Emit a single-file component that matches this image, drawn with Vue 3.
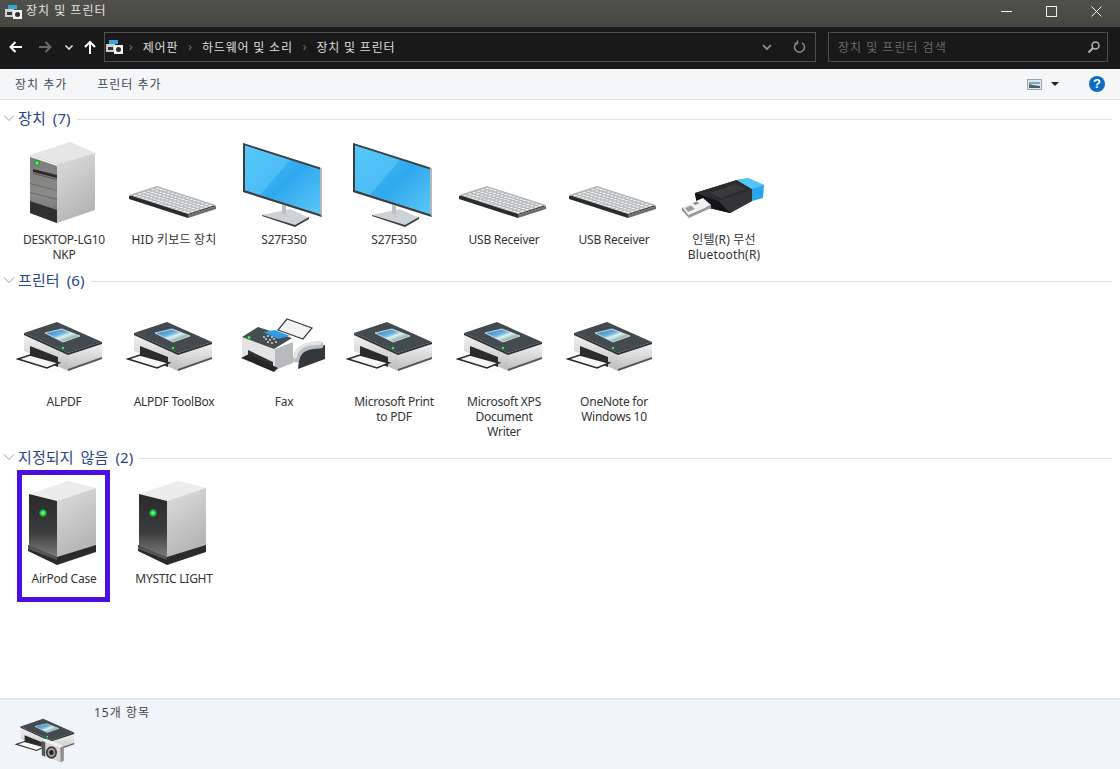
<script setup>
const groups = [
  {
    name: '장치',
    count: 7,
    items: [
      { icon: 'tower', label: 'DESKTOP-LG10\nNKP' },
      { icon: 'keyboard', label: 'HID 키보드 장치', ko: true },
      { icon: 'monitor', label: 'S27F350' },
      { icon: 'monitor', label: 'S27F350' },
      { icon: 'keyboard', label: 'USB Receiver' },
      { icon: 'keyboard', label: 'USB Receiver' },
      { icon: 'usb', label: '인텔(R) 무선\nBluetooth(R)', ko: true },
    ],
  },
  {
    name: '프린터',
    count: 6,
    items: [
      { icon: 'printer', label: 'ALPDF' },
      { icon: 'printer', label: 'ALPDF ToolBox' },
      { icon: 'fax', label: 'Fax' },
      { icon: 'printer', label: 'Microsoft Print\nto PDF' },
      { icon: 'printer', label: 'Microsoft XPS\nDocument\nWriter' },
      { icon: 'printer', label: 'OneNote for\nWindows 10' },
    ],
  },
  {
    name: '지정되지 않음',
    count: 2,
    items: [
      { icon: 'drive', label: 'AirPod Case', marked: true },
      { icon: 'drive', label: 'MYSTIC LIGHT' },
    ],
  },
];

const crumbs = ['제어판', '하드웨어 및 소리', '장치 및 프린터'];

// keyboard keys are laid out on a flat grid and skewed with a matrix in the symbol
const keys = [];
for (let r = 0; r < 6; r++) {
  for (let c = 0; c < 15; c++) {
    keys.push({ x: c + 0.18, y: r + 0.2 });
  }
}
</script>

<template>
  <div class="window">
    <svg class="defs" width="0" height="0">
      <defs>
        <linearGradient id="g-tower" x1="0" y1="0" x2="0" y2="1">
          <stop offset="0" stop-color="#7a7a7a" />
          <stop offset="0.6" stop-color="#8d8c8a" />
          <stop offset="1" stop-color="#6a6a68" />
        </linearGradient>
        <linearGradient id="g-side" x1="0" y1="0" x2="0.4" y2="1">
          <stop offset="0" stop-color="#dedede" />
          <stop offset="1" stop-color="#b5b5b5" />
        </linearGradient>
        <linearGradient id="g-screen" x1="0" y1="0" x2="1" y2="1">
          <stop offset="0" stop-color="#4cc2f8" />
          <stop offset="0.55" stop-color="#2fa9ee" />
          <stop offset="1" stop-color="#5cc6f6" />
        </linearGradient>
        <linearGradient id="g-drive" x1="0" y1="0" x2="0" y2="1">
          <stop offset="0" stop-color="#2a2a2a" />
          <stop offset="0.6" stop-color="#3c3c3c" />
          <stop offset="1" stop-color="#7c7c7c" />
        </linearGradient>
        <linearGradient id="g-body" x1="0" y1="0" x2="0" y2="1">
          <stop offset="0" stop-color="#f5f5f5" />
          <stop offset="1" stop-color="#bdbdbd" />
        </linearGradient>
        <linearGradient id="g-photo" x1="0" y1="0" x2="1" y2="1">
          <stop offset="0" stop-color="#1f73c0" />
          <stop offset="0.42" stop-color="#6fb6dd" />
          <stop offset="0.55" stop-color="#dceff4" />
          <stop offset="1" stop-color="#1f5a40" />
        </linearGradient>
        <radialGradient id="g-led">
          <stop offset="0" stop-color="#7dff8a" />
          <stop offset="0.6" stop-color="#1fd04a" />
          <stop offset="1" stop-color="#1c6b34" stop-opacity="0.4" />
        </radialGradient>
      </defs>

      <symbol id="small" viewBox="0 0 17 15">
        <rect x="3" y="0" width="9" height="4" fill="#3aa6d8" />
        <rect x="0" y="4" width="9" height="8" fill="#c9d1d6" />
        <rect x="2" y="7" width="5" height="3" fill="#30363a" />
        <rect x="8" y="5" width="9" height="9" fill="#f2f2f2" />
        <circle cx="12.500" cy="9.500" r="2.500" fill="#2a2e31" />
      </symbol>

      <symbol id="tower" viewBox="0 0 96 96">
        <polygon points="14,18 54,5 79,16 41,27" fill="#e6e6e6" />
        <polygon points="41,27 79,16 79,73 41,86" fill="url(#g-side)" />
        <polygon points="14,18 41,27 41,86 14,76" fill="url(#g-tower)" />
        <polygon points="14,18 41,27 41,29 14,20" fill="#f0f0f0" />
        <polygon points="17,32 41,38 41,41 17,35" fill="#2b2b2b" />
        <polygon points="17,36 41,42 41,43 17,37" fill="#555" />
        <polygon points="14,46 41,53 41,54 14,47" fill="#6a6a6a" />
        <polygon points="14,55 41,62 41,63 14,56" fill="#6a6a6a" />
        <polygon points="14,64 41,73 41,86 14,76" fill="#303030" />
        <circle cx="21" cy="26" r="3" fill="url(#g-led)" />
      </symbol>

      <symbol id="keyboard" viewBox="0 0 96 96">
        <polygon points="3,59 31,50 90,69 62,78 62,81 3,62" fill="#2b2b2b" />
        <polygon points="62,81 90,72 90,69 62,78" fill="#6d6d6d" />
        <polygon points="3,58 31,49 90,68 62,77" fill="#b1b5b8" />
        <g transform="matrix(3.75 1.22 4.4 -1.43 5.4 58.6)">
          <rect v-for="k in keys" :key="k.x + '-' + k.y" :x="k.x" :y="k.y" width="0.64" height="0.6" fill="#f1f3f3" />
        </g>
      </symbol>

      <symbol id="monitor" viewBox="0 0 96 96">
        <polygon points="26,78 54,72 73,81 59,90" fill="#cdd2d6" />
        <polygon points="59,88 73,80 73,82 59,90 26,79 26,78" fill="#3d3d3d" />
        <polygon points="46,68 50,69 50,78 46,77" fill="#b9bfc3" />
        <polygon points="7,6 86,31 86,80 7,55" fill="#b4b8bc" />
        <polygon points="7,6 84,30.500 84,33 9,9 9,53 84,77 86,80 7,55" fill="#3b3f44" />
        <polygon points="9,8.500 84,32.500 84,77 9,53" fill="url(#g-screen)" />
        <polygon points="9,8.500 54,23 24,58 9,53" fill="#63cdfa" opacity="0.5" />
      </symbol>

      <symbol id="usb" viewBox="0 0 96 96">
        <polygon points="19,56 61,43 76,52 76,64 54,76 21,68" fill="#1e1e20" />
        <polygon points="19,56 61,43 76,52 42,64" fill="#2c2c2e" />
        <polygon points="34,56 60,47 70,52 44,61" fill="#3a3a3d" />
        <polygon points="42,64 76,52 76,64 54,76" fill="#343437" />
        <polygon points="19,56 42,64 54,76 21,68" fill="#141416" />
        <polygon points="61,43 72,41 88,48 87,61 76,64 76,52" fill="#2aa5ea" />
        <polygon points="61,43 72,41 88,48 76,52" fill="#52c6f6" />
        <polygon points="12,78 35,68 35,71 13,81" fill="#9a9a9a" />
        <polygon points="6,70 27,61 35,68 12,78" fill="#f2f2f2" />
        <polygon points="6,70 12,78 13,81 6,73" fill="#777" />
        <polygon points="9,71 15,68.500 19,72 12,75" fill="#9d9d9d" />
        <polygon points="17,66 21,64.500 23,66.500 19,68" fill="#8a8a8a" />
      </symbol>

      <symbol id="printer" viewBox="0 0 96 96">
        <polygon points="8,34 52,54 52,72 8,52" fill="url(#g-body)" />
        <polygon points="52,54 86,43 86,60 52,72" fill="url(#g-body)" />
        <polygon points="52,70 86,58 86,60 52,72" fill="#555" />
        <polygon points="8,34 41,23 86,43 52,54" fill="#434a50" />
        <polygon points="8,34 52,54 86,43 86,45 52,56 8,36" fill="#2c3033" />
        <polygon points="14,47 42,58 42,68 14,57" fill="#2b2b2b" />
        <polygon points="2,60 14,56 43,64 31,69" fill="#f7f7f7" stroke="#2a2a2a" stroke-width="1.600" />
        <polygon points="29,34 46,30 64,37 47,43" fill="url(#g-photo)" stroke="#e6edf1" stroke-width="0.8" />
        <circle cx="47" cy="49" r="1.800" fill="url(#g-led)" />
      </symbol>

      <symbol id="fax" viewBox="0 0 96 96">
        <polygon points="42,31 51,20 76,29 67,40" fill="#f3f3f3" stroke="#3e3e3e" stroke-width="1.200" />
        <polygon points="6,38 39,50 39,71 6,58" fill="#e4e4e4" />
        <polygon points="39,50 57,43 57,64 39,71" fill="#b8babc" />
        <polygon points="6,38 22,28 56,39 38,50" fill="#454c52" />
        <polygon points="27,33 39,31 54,37 42,40" fill="#2f9ae6" />
        <g fill="#e8e8e8">
          <circle cx="28" cy="38" r="0.900" /><circle cx="32" cy="37" r="0.900" /><circle cx="36" cy="38" r="0.900" />
          <circle cx="30" cy="40" r="0.900" /><circle cx="34" cy="41" r="0.900" /><circle cx="38" cy="40" r="0.900" />
          <circle cx="32" cy="43" r="0.900" /><circle cx="36" cy="44" r="0.900" /><circle cx="40" cy="43" r="0.900" />
        </g>
        <circle cx="13" cy="38.500" r="2.200" fill="url(#g-led)" />
        <polygon points="12,51 37,63 37,70 12,59" fill="#2e3236" />
        <polygon points="5,59 13,55 42,69 38,73" fill="#262626" />
        <polygon points="64,50 89,46 89,60 62,70" fill="#33383c" />
        <path d="M60 60 C62 50 70 46 84 46" fill="none" stroke="#b9bfc2" stroke-width="7" stroke-linecap="round" />
        <path d="M59 58 C61 48 69 44 84 44" fill="none" stroke="#e2e5e7" stroke-width="3.500" stroke-linecap="round" />
      </symbol>

      <symbol id="drive" viewBox="0 0 96 96">
        <polygon points="12,75 12,69 41,80 80,68 80,76 41,89" fill="#2a2a2a" />
        <polygon points="12,70 41,81 41,84 12,73" fill="#555" />
        <polygon points="13,18 52,5 80,12 41,25" fill="#ececec" />
        <polygon points="41,25 80,12 80,69 41,81" fill="url(#g-side)" />
        <polygon points="13,18 41,25 41,81 13,70" fill="url(#g-drive)" />
        <circle cx="27" cy="37" r="4.200" fill="url(#g-led)" />
      </symbol>
    </svg>

    <header class="titlebar">
      <svg class="title-icon" width="17" height="15"><use href="#small" width="17" height="15" /></svg>
      <span class="title-text">장치 및 프린터</span>
      <div class="controls">
        <svg width="45" height="22" viewBox="0 0 45 22"><path d="M17 11.500h11" stroke="#f0f0f0" fill="none" /></svg>
        <svg width="45" height="22" viewBox="0 0 45 22"><rect x="17.500" y="6.500" width="10" height="10" stroke="#f0f0f0" fill="none" /></svg>
        <svg width="45" height="22" viewBox="0 0 45 22"><path d="M17.500 6.500l10 10M27.500 6.500l-10 10" stroke="#f0f0f0" fill="none" /></svg>
      </div>
    </header>

    <nav class="addressbar">
      <div class="nav-buttons">
        <svg width="16" height="16" viewBox="0 0 16 16" class="nav-back"><path d="M14 8H3M7.500 3L2.500 8l5 5" stroke="#fff" stroke-width="2" fill="none" /></svg>
        <svg width="16" height="16" viewBox="0 0 16 16" class="nav-forward"><path d="M2 8h11M8.500 3l5 5-5 5" stroke="#6a6a6a" stroke-width="2" fill="none" /></svg>
        <svg width="10" height="10" viewBox="0 0 10 10" class="nav-recent"><path d="M1.500 3.500L5 7l3.500-3.500" stroke="#ddd" stroke-width="1.600" fill="none" /></svg>
        <svg width="16" height="16" viewBox="0 0 16 16" class="nav-up"><path d="M8 15V3M3 8l5-5 5 5" stroke="#fff" stroke-width="2" fill="none" /></svg>
      </div>
      <div class="address">
        <svg class="addr-icon" width="17" height="15"><use href="#small" width="17" height="15" /></svg>
        <template v-for="c in crumbs" :key="c">
          <span class="sep">›</span>
          <span class="crumb">{{ c }}</span>
        </template>
        <svg class="addr-down" width="12" height="10" viewBox="0 0 12 10"><path d="M2 3l4 4 4-4" stroke="#9a9a9a" stroke-width="1.600" fill="none" /></svg>
        <svg class="addr-refresh" width="14" height="14" viewBox="0 0 14 14"><path d="M4 2.800a5 5 0 1 0 5 0M4.500 0.500v3h-3" stroke="#8a8a8a" stroke-width="1.500" fill="none" /></svg>
      </div>
      <div class="search">
        <span>장치 및 프린터 검색</span>
        <svg width="14" height="14" viewBox="0 0 14 14"><circle cx="8.500" cy="5.500" r="3.500" stroke="#b5b5b5" stroke-width="1.500" fill="none" /><path d="M6 8l-4.500 4.500" stroke="#b5b5b5" stroke-width="2" /></svg>
      </div>
    </nav>

    <div class="toolbar">
      <span class="tool">장치 추가</span>
      <span class="tool">프린터 추가</span>
      <div class="tool-right">
        <svg width="15" height="11" viewBox="0 0 15 11"><rect x="0.500" y="0.500" width="14" height="10" fill="#dfe8ee" stroke="#9aa6ae" /><path d="M2 3h11v2H2z" fill="#7fa8c0" /><path d="M2 5l4 1 7 1v2H2z" fill="#47606c" /></svg>
        <span class="view-caret"></span>
        <span class="help">?</span>
      </div>
    </div>

    <main class="content">
      <section v-for="g in groups" :key="g.name" class="group">
        <div class="group-head">
          <svg width="12" height="8" viewBox="0 0 12 8"><path d="M1 1.500l5 5 5-5" stroke="#9aa0a6" fill="none" /></svg>
          <span class="group-name">{{ g.name }} ({{ g.count }})</span>
          <span class="group-line"></span>
        </div>
        <div class="items">
          <div v-for="(item, i) in g.items" :key="i" class="item">
            <svg class="item-icon" width="96" height="95" viewBox="0 0 96 95"><use :href="'#' + item.icon" width="96" height="96" /></svg>
            <div class="item-label" :class="{ ko: item.ko }">{{ item.label }}</div>
            <div v-if="item.marked" class="marker"></div>
          </div>
        </div>
      </section>
    </main>

    <footer class="statusbar">
      <svg class="status-icon" width="66" height="66" viewBox="0 0 96 96">
        <use href="#printer" width="96" height="96" />
        <polygon points="39,55 66,65 66,86 39,76" fill="#d6d6d6" />
        <polygon points="39,55 45,52 71,62 66,65" fill="#f0f0f0" />
        <polygon points="66,65 71,62 71,84 66,86" fill="#8f8f8f" />
        <polygon points="39,55 44,57 44,78 39,76" fill="#555" />
        <ellipse cx="53" cy="72" rx="8" ry="9" fill="#3a3a3a" />
        <ellipse cx="53" cy="72" rx="5.500" ry="6.500" fill="#a0a0a0" />
        <ellipse cx="53" cy="72" rx="3.200" ry="3.800" fill="#222" />
      </svg>
      <span class="status-text">15개 항목</span>
    </footer>
  </div>
</template>

<style>
html,
body {
  margin: 0;
  background: #fff;
}
</style>

<style scoped>
.window {
  width: 1120px;
  height: 769px;
  display: flex;
  flex-direction: column;
  overflow: hidden;
  font-family: "Noto Sans", "Noto Sans CJK KR", sans-serif;
  font-size: 12px;
  color: #333;
  background: #fff;
}

.defs {
  position: absolute;
}

.titlebar {
  height: 27px;
  flex: none;
  display: flex;
  align-items: center;
  padding-left: 5px;
  background: linear-gradient(#51514c, #46463f);
  color: #e2e2e2;
}

.title-text {
  margin-left: 4px;
  margin-top: -5px;
  line-height: 16px;
  letter-spacing: 1px;
}

.title-icon {
  margin-top: -3px;
}

.controls {
  margin-left: auto;
  margin-top: -5px;
  display: flex;
  gap: 0;
  padding-right: 1px;
}

.addressbar {
  height: 42px;
  flex: none;
  box-sizing: border-box;
  padding-bottom: 2px;
  display: flex;
  align-items: center;
  background: #191919;
  color: #e0e0e0;
}

.nav-buttons {
  width: 104px;
  flex: none;
  display: flex;
  align-items: center;
}

.nav-back {
  margin-left: 8px;
}

.nav-forward {
  margin-left: 13px;
}

.nav-recent {
  margin-left: 11px;
}

.nav-up {
  margin-left: 8px;
}

.address {
  width: 712px;
  height: 30px;
  box-sizing: border-box;
  border: 1px solid #4e4e4e;
  display: flex;
  align-items: center;
  padding-left: 1px;
}

.addr-icon {
  margin-right: 3px;
}

.sep {
  color: #777;
  margin: 0 10px 0 3px;
  line-height: 16px;
}

.crumb {
  margin-right: 7px;
  color: #dedede;
  letter-spacing: 0.8px;
}

.addr-down {
  margin-left: auto;
  margin-right: 20px;
}

.addr-refresh {
  margin-right: 8px;
}

.search {
  width: 280px;
  height: 30px;
  box-sizing: border-box;
  margin-left: 12px;
  border: 1px solid #4e4e4e;
  display: flex;
  align-items: center;
  justify-content: space-between;
  padding: 0 6px 0 9px;
  color: #686868;
  letter-spacing: 1px;
}

.toolbar {
  height: 31px;
  flex: none;
  box-sizing: border-box;
  border-bottom: 1px solid #e3e5e8;
  background: #f5f6f7;
  display: flex;
  align-items: center;
  padding-left: 15px;
  color: #3d4a57;
  letter-spacing: 1px;
}

.tool {
  margin-right: 30px;
}

.tool-right {
  margin-left: auto;
  display: flex;
  align-items: center;
  padding-right: 15px;
}

.view-caret {
  margin-left: 9px;
  border-style: solid;
  border-width: 4px 4px 0;
  border-color: #222 transparent transparent;
}

.help {
  margin-left: 30px;
  width: 16px;
  height: 16px;
  border-radius: 50%;
  background: #0f6cc4;
  color: #fff;
  font: bold 13px/16px "Liberation Sans", sans-serif;
  text-align: center;
  letter-spacing: 0;
}

.content {
  flex: 1;
  min-height: 0;
  padding: 9px 8px 0 0;
  background: #fff;
}

.group {
  margin-bottom: 9px;
}

.group-head {
  height: 18px;
  display: flex;
  align-items: center;
  padding-left: 3px;
}

.group-name {
  margin-left: 3px;
  font-size: 15px;
  line-height: 18px;
  word-spacing: 3px;
  letter-spacing: 0.1px;
  color: #2a4390;
}

.group-line {
  flex: 1;
  height: 1px;
  margin: 2px 0 0 6px;
  background: #e2e2e2;
}

.items {
  display: flex;
  padding-top: 10px;
  padding-left: 9px;
}

.item {
  position: relative;
  width: 110px;
  flex: none;
  text-align: center;
}

.item-icon {
  display: block;
  margin: 0 auto;
}

.item-label {
  line-height: 15px;
  white-space: pre-line;
  letter-spacing: -0.25px;
  color: #333;
}

.item-label.ko {
  letter-spacing: 0.2px;
}

.marker {
  position: absolute;
  left: 8px;
  top: -6px;
  width: 93px;
  height: 132px;
  box-sizing: border-box;
  border: 5px solid #4a0fdc;
}

.statusbar {
  height: 71px;
  flex: none;
  box-sizing: border-box;
  border-top: 2px solid #dfe6ee;
  background: #f0f4fb;
  display: flex;
  align-items: flex-start;
  padding: 3px 0 0 15px;
}

.status-text {
  margin-left: 13px;
  margin-top: 1px;
  line-height: 18px;
  letter-spacing: 1px;
  color: #444;
}
</style>
